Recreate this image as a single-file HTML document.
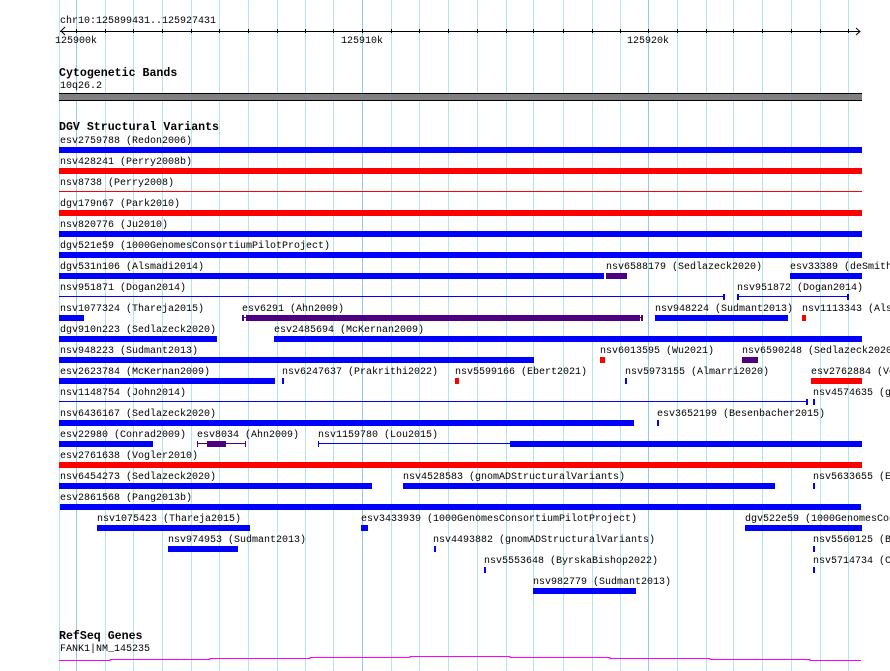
<!DOCTYPE html>
<html><head><meta charset="utf-8"><style>
html,body{margin:0;padding:0}
body{width:890px;height:671px;position:relative;overflow:hidden;background:#fff;font-family:"Liberation Mono","DejaVu Sans Mono",monospace;font-size:10px;color:#000}
.g{position:absolute;top:0;width:1px;height:671px;background:#b0e6ee}
.gd{background:#8ccdea}
.t{position:absolute;line-height:11px;white-space:pre;overflow:visible}
.h{position:absolute;font-weight:bold;font-size:11.6px;line-height:12px;white-space:pre}
.b{position:absolute;height:6px;background:#0000ff}
.l{position:absolute;height:1px;background:#0000ff}
.k{position:absolute;width:2px;height:6px;background:#0000ff}
div.r{background:#ff0000}
div.p{background:#4d0080}
.tk{position:absolute;top:29px;width:1px;height:4px;background:#000}
</style></head><body>
<div class="g" style="left:59px"></div><div class="g gd" style="left:76px"></div><div class="g" style="left:105px"></div><div class="g" style="left:133px"></div><div class="g" style="left:162px"></div><div class="g" style="left:191px"></div><div class="g" style="left:219px"></div><div class="g" style="left:248px"></div><div class="g" style="left:277px"></div><div class="g" style="left:305px"></div><div class="g" style="left:333px"></div><div class="g gd" style="left:362px"></div><div class="g" style="left:391px"></div><div class="g" style="left:419px"></div><div class="g" style="left:448px"></div><div class="g" style="left:477px"></div><div class="g" style="left:506px"></div><div class="g" style="left:533px"></div><div class="g" style="left:563px"></div><div class="g" style="left:592px"></div><div class="g" style="left:620px"></div><div class="g gd" style="left:648px"></div><div class="g" style="left:677px"></div><div class="g" style="left:706px"></div><div class="g" style="left:733px"></div><div class="g" style="left:762px"></div><div class="g" style="left:791px"></div><div class="g" style="left:820px"></div><div class="g" style="left:848px"></div>

<div class="t" style="left:60px;top:16px">chr10:125899431..125927431</div>
<div style="position:absolute;left:60px;top:31px;width:800px;height:1px;background:#000"></div>
<svg style="position:absolute;left:0;top:0" width="890" height="40"><polyline points="65,27 61,31 65,35" fill="none" stroke="#000"/><polyline points="856,28 860,31.5 856,35" fill="none" stroke="#000"/></svg>
<div class="tk" style="left:76px"></div><div class="tk" style="left:105px"></div><div class="tk" style="left:133px"></div><div class="tk" style="left:162px"></div><div class="tk" style="left:191px"></div><div class="tk" style="left:219px"></div><div class="tk" style="left:248px"></div><div class="tk" style="left:277px"></div><div class="tk" style="left:305px"></div><div class="tk" style="left:333px"></div><div class="tk" style="left:362px"></div><div class="tk" style="left:391px"></div><div class="tk" style="left:419px"></div><div class="tk" style="left:448px"></div><div class="tk" style="left:477px"></div><div class="tk" style="left:506px"></div><div class="tk" style="left:533px"></div><div class="tk" style="left:563px"></div><div class="tk" style="left:592px"></div><div class="tk" style="left:620px"></div><div class="tk" style="left:648px"></div><div class="tk" style="left:677px"></div><div class="tk" style="left:706px"></div><div class="tk" style="left:733px"></div><div class="tk" style="left:762px"></div><div class="tk" style="left:791px"></div><div class="tk" style="left:820px"></div><div class="tk" style="left:848px"></div>
<div class="t" style="left:55px;top:36px">125900k</div>
<div class="t" style="left:341px;top:36px">125910k</div>
<div class="t" style="left:627px;top:36px">125920k</div>

<div class="h" style="left:59px;top:68px">Cytogenetic Bands</div>
<div class="t" style="left:60px;top:81px">10q26.2</div>
<div style="position:absolute;left:59px;top:93px;width:803px;height:6px;background:#808080;border-top:1px solid #000;border-bottom:1px solid #000"></div>

<div class="h" style="left:59px;top:122px">DGV Structural Variants</div>

<div class="t" style="left:60px;top:136px">esv2759788 (Redon2006)</div><div class="b" style="left:59px;top:147px;width:803px"></div>
<div class="t" style="left:60px;top:157px">nsv428241 (Perry2008b)</div><div class="b r" style="left:59px;top:168px;width:803px"></div>
<div class="t" style="left:60px;top:178px">nsv8738 (Perry2008)</div><div class="l r" style="left:59px;top:191px;width:803px"></div>
<div class="t" style="left:60px;top:199px">dgv179n67 (Park2010)</div><div class="b r" style="left:59px;top:210px;width:803px"></div>
<div class="t" style="left:60px;top:220px">nsv820776 (Ju2010)</div><div class="b" style="left:59px;top:231px;width:803px"></div>
<div class="t" style="left:60px;top:241px">dgv521e59 (1000GenomesConsortiumPilotProject)</div><div class="b" style="left:59px;top:252px;width:803px"></div>

<div class="t" style="left:60px;top:262px">dgv531n106 (Alsmadi2014)</div><div class="b" style="left:59px;top:273px;width:545px"></div>
<div class="t" style="left:606px;top:262px">nsv6588179 (Sedlazeck2020)</div><div class="b p" style="left:606px;top:273px;width:21px"></div>
<div class="t" style="left:790px;top:262px">esv33389 (deSmith2007)</div><div class="b" style="left:790px;top:273px;width:72px"></div>

<div class="t" style="left:60px;top:283px">nsv951871 (Dogan2014)</div><div class="l" style="left:59px;top:296px;width:665px"></div><div class="k" style="left:723px;top:294px"></div>
<div class="t" style="left:737px;top:283px">nsv951872 (Dogan2014)</div><div class="l" style="left:737px;top:296px;width:111px"></div><div class="k" style="left:737px;top:294px"></div><div class="k" style="left:847px;top:294px"></div>

<div class="t" style="left:60px;top:304px">nsv1077324 (Thareja2015)</div><div class="b" style="left:59px;top:315px;width:25px"></div>
<div class="t" style="left:242px;top:304px">esv6291 (Ahn2009)</div><div class="l p" style="left:242px;top:317px;width:401px"></div><div class="k p" style="left:242px;top:315px"></div><div class="b p" style="left:246px;top:315px;width:394px"></div><div class="k p" style="left:641px;top:315px"></div>
<div class="t" style="left:655px;top:304px">nsv948224 (Sudmant2013)</div><div class="b" style="left:655px;top:315px;width:133px"></div>
<div class="t" style="left:802px;top:304px">nsv1113343 (Alsmadi2014)</div><div class="b r" style="left:802px;top:315px;width:4px"></div>

<div class="t" style="left:60px;top:325px">dgv910n223 (Sedlazeck2020)</div><div class="b" style="left:59px;top:336px;width:158px"></div>
<div class="t" style="left:274px;top:325px">esv2485694 (McKernan2009)</div><div class="b" style="left:274px;top:336px;width:588px"></div>

<div class="t" style="left:60px;top:346px">nsv948223 (Sudmant2013)</div><div class="b" style="left:59px;top:357px;width:475px"></div>
<div class="t" style="left:600px;top:346px">nsv6013595 (Wu2021)</div><div class="b r" style="left:600px;top:357px;width:5px"></div>
<div class="t" style="left:742px;top:346px">nsv6590248 (Sedlazeck2020)</div><div class="b p" style="left:742px;top:357px;width:16px"></div>

<div class="t" style="left:60px;top:367px">esv2623784 (McKernan2009)</div><div class="b" style="left:59px;top:378px;width:216px"></div>
<div class="t" style="left:282px;top:367px">nsv6247637 (Prakrithi2022)</div><div class="k" style="left:282px;top:378px"></div>
<div class="t" style="left:455px;top:367px">nsv5599166 (Ebert2021)</div><div class="b r" style="left:455px;top:378px;width:4px"></div>
<div class="t" style="left:625px;top:367px">nsv5973155 (Almarri2020)</div><div class="k" style="left:625px;top:378px"></div>
<div class="t" style="left:811px;top:367px">esv2762884 (Vogler2010)</div><div class="b r" style="left:811px;top:378px;width:51px"></div>

<div class="t" style="left:60px;top:388px">nsv1148754 (John2014)</div><div class="l" style="left:59px;top:401px;width:748px"></div><div class="k" style="left:806px;top:399px"></div>
<div class="t" style="left:813px;top:388px">nsv4574635 (gnomADStructuralVariants)</div><div class="k" style="left:813px;top:399px"></div>

<div class="t" style="left:60px;top:409px">nsv6436167 (Sedlazeck2020)</div><div class="b" style="left:59px;top:420px;width:575px"></div>
<div class="t" style="left:657px;top:409px">esv3652199 (Besenbacher2015)</div><div class="k" style="left:657px;top:420px"></div>

<div class="t" style="left:60px;top:430px">esv22980 (Conrad2009)</div><div class="b" style="left:59px;top:441px;width:94px"></div>
<div class="t" style="left:197px;top:430px">esv8034 (Ahn2009)</div><div class="l p" style="left:197px;top:443px;width:48px"></div><div class="k p" style="left:197px;top:441px;width:1px"></div><div class="k p" style="left:245px;top:441px;width:1px"></div><div class="b p" style="left:207px;top:441px;width:19px"></div>
<div class="t" style="left:318px;top:430px">nsv1159780 (Lou2015)</div><div class="l" style="left:318px;top:443px;width:192px"></div><div class="k" style="left:318px;top:441px;width:1px"></div><div class="b" style="left:510px;top:441px;width:352px"></div>

<div class="t" style="left:60px;top:451px">esv2761638 (Vogler2010)</div><div class="b r" style="left:59px;top:462px;width:803px"></div>

<div class="t" style="left:60px;top:472px">nsv6454273 (Sedlazeck2020)</div><div class="b" style="left:59px;top:483px;width:313px"></div>
<div class="t" style="left:403px;top:472px">nsv4528583 (gnomADStructuralVariants)</div><div class="b" style="left:403px;top:483px;width:372px"></div>
<div class="t" style="left:813px;top:472px">nsv5633655 (Ebert2021)</div><div class="k" style="left:813px;top:483px"></div>

<div class="t" style="left:60px;top:493px">esv2861568 (Pang2013b)</div><div class="b" style="left:60px;top:504px;width:801px"></div>

<div class="t" style="left:97px;top:514px">nsv1075423 (Thareja2015)</div><div class="b" style="left:97px;top:525px;width:153px"></div>
<div class="t" style="left:361px;top:514px">esv3433939 (1000GenomesConsortiumPilotProject)</div><div class="b" style="left:361px;top:525px;width:7px"></div>
<div class="t" style="left:745px;top:514px">dgv522e59 (1000GenomesConsortiumPilotProject)</div><div class="b" style="left:745px;top:525px;width:117px"></div>

<div class="t" style="left:168px;top:535px">nsv974953 (Sudmant2013)</div><div class="b" style="left:168px;top:546px;width:70px"></div>
<div class="t" style="left:433px;top:535px">nsv4493882 (gnomADStructuralVariants)</div><div class="k" style="left:434px;top:546px"></div>
<div class="t" style="left:813px;top:535px">nsv5560125 (ByrskaBishop2022)</div><div class="k" style="left:813px;top:546px"></div>

<div class="t" style="left:484px;top:556px">nsv5553648 (ByrskaBishop2022)</div><div class="k" style="left:484px;top:567px"></div>
<div class="t" style="left:813px;top:556px">nsv5714734 (Collins2017)</div><div class="k" style="left:813px;top:567px"></div>

<div class="t" style="left:533px;top:577px">nsv982779 (Sudmant2013)</div><div class="b" style="left:533px;top:588px;width:103px"></div>

<div class="h" style="left:59px;top:631px">RefSeq Genes</div>
<div class="t" style="left:60px;top:644px">FANK1|NM_145235</div>
<svg style="position:absolute;left:0;top:650px" width="890" height="21"><polyline points="59,10.5 110,10.5 110,9.5 210,9.5 210,8.5 310,8.5 310,7.5 410,7.5 410,6.5 510,6.5 510,7.5 610,7.5 610,8.5 710,8.5 710,9.5 810,9.5 810,10.5 861,10.5" fill="none" stroke="#ff00ff" stroke-width="1"/></svg>
</body></html>
